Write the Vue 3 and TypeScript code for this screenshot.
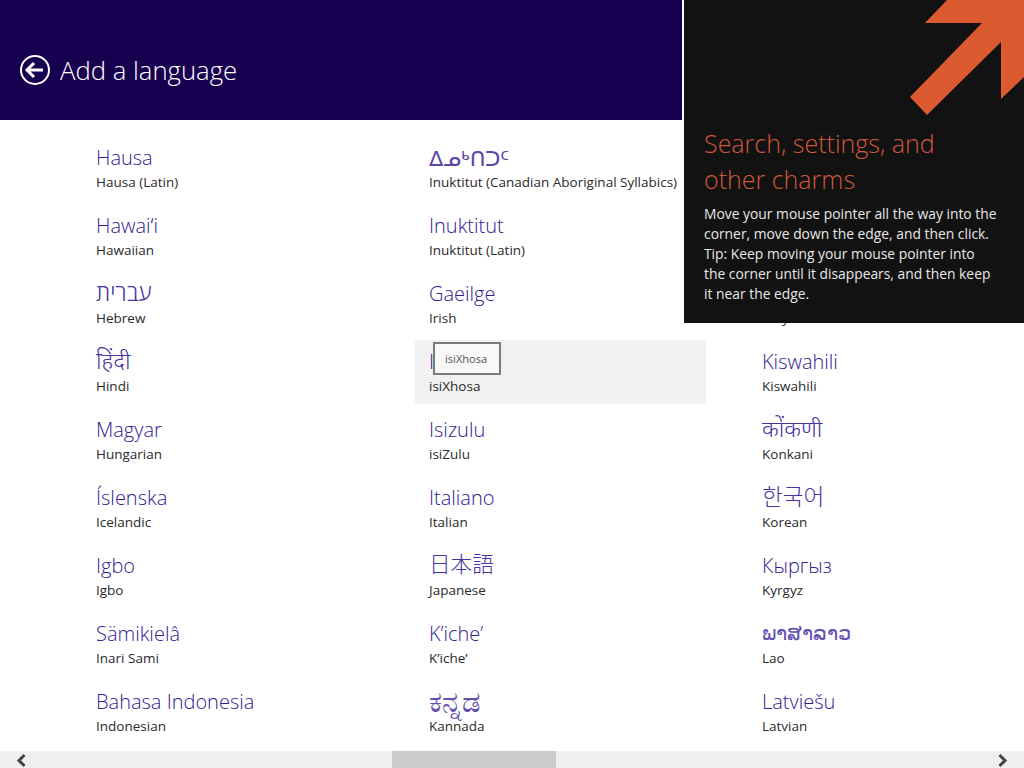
<script setup lang="ts">
interface Language {
  name: string
  label: string
  script?: 'wide' | 'cjk' | 'hangul' | 'syllabics' | 'lao' | 'kannada'
}

const languages: Language[] = [
  { name: 'Hausa', label: 'Hausa (Latin)' },
  { name: 'Hawaiʻi', label: 'Hawaiian' },
  { name: 'עברית', label: 'Hebrew', script: 'wide' },
  { name: 'हिंदी', label: 'Hindi', script: 'wide' },
  { name: 'Magyar', label: 'Hungarian' },
  { name: 'Íslenska', label: 'Icelandic' },
  { name: 'Igbo', label: 'Igbo' },
  { name: 'Sämikielâ', label: 'Inari Sami' },
  { name: 'Bahasa Indonesia', label: 'Indonesian' },
  { name: 'ᐃᓄᒃᑎᑐᑦ', label: 'Inuktitut (Canadian Aboriginal Syllabics)', script: 'syllabics' },
  { name: 'Inuktitut', label: 'Inuktitut (Latin)' },
  { name: 'Gaeilge', label: 'Irish' },
  { name: 'IsiXhosa', label: 'isiXhosa' },
  { name: 'Isizulu', label: 'isiZulu' },
  { name: 'Italiano', label: 'Italian' },
  { name: '日本語', label: 'Japanese', script: 'cjk' },
  { name: 'K’iche’', label: 'K’iche’' },
  { name: 'ಕನ್ನಡ', label: 'Kannada', script: 'kannada' },
  { name: 'Қазақ', label: 'Kazakh' },
  { name: 'ខ្មែរ', label: 'Khmer' },
  { name: 'Ikinyarwanda', label: 'Kinyarwanda' },
  { name: 'Kiswahili', label: 'Kiswahili' },
  { name: 'कोंकणी', label: 'Konkani', script: 'wide' },
  { name: '한국어', label: 'Korean', script: 'hangul' },
  { name: 'Кыргыз', label: 'Kyrgyz' },
  { name: 'ພາສາລາວ', label: 'Lao', script: 'lao' },
  { name: 'Latviešu', label: 'Latvian' },
]

const hoveredLabel = 'isiXhosa'
</script>

<template>
  <div class="page">
    <header class="header">
      <svg class="back" width="32" height="32" viewBox="0 0 32 32" fill="none">
        <circle cx="16" cy="16" r="14" stroke="#fff" stroke-width="2" />
        <path d="M8 16h16" stroke="#fff" stroke-width="3" />
        <path d="M15 9l-7 7 7 7" stroke="#fff" stroke-width="3" />
      </svg>
      <h1 class="title">Add a language</h1>
    </header>

    <main class="list">
      <div
        v-for="lang in languages"
        :key="lang.label"
        class="item"
        :class="{ hovered: lang.label === hoveredLabel }"
      >
        <div class="name" :class="lang.script">{{ lang.name }}</div>
        <div class="label">{{ lang.label }}</div>
        <div v-if="lang.label === hoveredLabel" class="tooltip">{{ lang.label }}</div>
      </div>
    </main>

    <div class="scrollbar">
      <svg width="12" height="17" viewBox="0 0 12 17" fill="none">
        <path d="M9.5 4L4 9.5l5.5 5.5" stroke="#444" stroke-width="3" />
      </svg>
      <div class="thumb"></div>
      <svg width="12" height="17" viewBox="0 0 12 17" fill="none">
        <path d="M2.5 4L8 9.5 2.5 15" stroke="#444" stroke-width="3" />
      </svg>
    </div>

    <aside class="tip">
      <svg class="arrow" width="116" height="116" viewBox="0 0 116 116">
        <path d="M39 0L17 23H74L2 97L19 115L93 42V99L116 77V0Z" fill="#dc5a30" />
      </svg>
      <h2 class="tip-title">Search, settings, and other charms</h2>
      <p class="tip-text">
        Move your mouse pointer all the way into the corner, move down the edge, and then click.
        Tip: Keep moving your mouse pointer into the corner until it disappears, and then keep
        it near the edge.
      </p>
    </aside>
  </div>
</template>

<style scoped>
.page {
  position: relative;
  display: flex;
  flex-direction: column;
  height: 768px;
  overflow: hidden;
  background: #fff;
  font-family: "Open Sans", "Noto Sans", "DejaVu Sans Light", "DejaVu Sans", "Noto Sans CJK KR", "Noto Sans CJK JP", sans-serif;
}

.header {
  display: flex;
  align-items: center;
  gap: 9px;
  box-sizing: border-box;
  height: 120px;
  padding: 20px 0 0 19px;
  background: #180050;
  color: #fff;
}

.back {
  flex: none;
}

.title {
  margin: 0;
  font-size: 25.7px;
  font-weight: 300;
}

.list {
  flex: 1;
  display: grid;
  grid-template-rows: repeat(9, 64px);
  grid-auto-flow: column;
  grid-auto-columns: 291px;
  column-gap: 42px;
  row-gap: 4px;
  padding: 16px 0 0 82px;
}

.item {
  position: relative;
  padding: 7px 14px 0;
  white-space: nowrap;
}

.item.hovered {
  background: #f1f1f1;
}

.name {
  height: 30px;
  font-size: 20px;
  line-height: 30px;
  font-weight: 300;
  color: #33208f;
}

.name.wide {
  font-size: 23px;
  line-height: 26px;
  color: #4a33a0;
}

.name.cjk {
  font-size: 21.6px;
  line-height: 26px;
  color: #4a33a0;
}

.name.hangul {
  font-size: 22.6px;
  line-height: 28px;
  color: #4a33a0;
}

.name.syllabics {
  font-size: 20.5px;
  color: #5a45a8;
}

.name.lao {
  font-size: 21px;
  line-height: 27px;
  color: #6450b0;
}

.name.kannada {
  font-size: 29px;
  line-height: 27px;
  color: #6450b0;
}

.label {
  font-size: 13.5px;
  line-height: 18px;
  color: #2a2a2a;
}

.tooltip {
  position: absolute;
  left: 18px;
  top: 2px;
  padding: 7px 12px 7px 10px;
  border: 2px solid #7b7b7b;
  background: #f8f8f8;
  font-size: 11.1px;
  line-height: 15px;
  color: #555;
}

.scrollbar {
  display: flex;
  align-items: center;
  height: 17px;
  padding: 0 15px;
  background: #efefef;
}

.thumb {
  width: 164px;
  height: 17px;
  margin: 0 auto 0 365px;
  background: #cbcbcb;
}

.tip {
  position: absolute;
  top: 0;
  right: 0;
  width: 340px;
  height: 323px;
  padding: 125px 25px 0 20px;
  box-sizing: border-box;
  background: #121212;
  box-shadow: -2px 0 0 #fff;
}

.arrow {
  position: absolute;
  top: 0;
  right: 0;
}

.tip-title {
  margin: 0;
  font-size: 25px;
  line-height: 36px;
  font-weight: 300;
  color: #d0583a;
}

.tip-text {
  margin: 7px 0 0;
  font-size: 13.85px;
  line-height: 20px;
  color: #e8e8e8;
}
</style>

<style>
html,
body {
  margin: 0;
  overflow: hidden;
}
</style>
